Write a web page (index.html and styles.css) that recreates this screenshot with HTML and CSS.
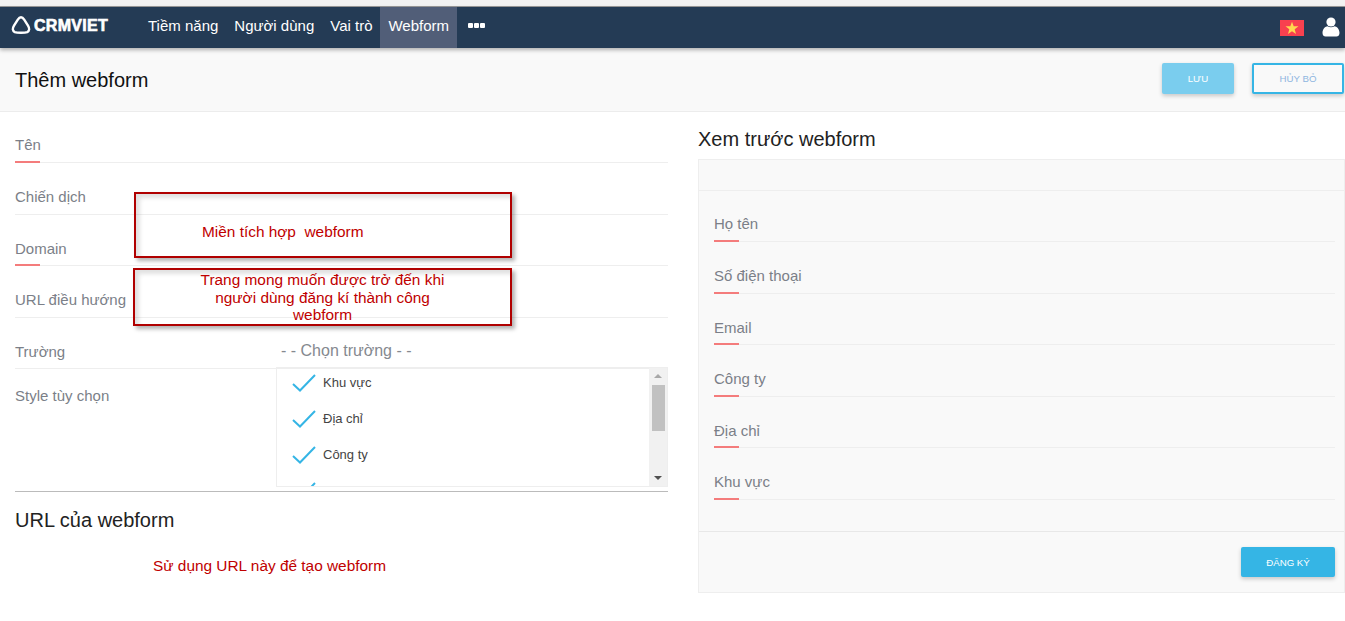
FILE: index.html
```html
<!DOCTYPE html>
<html lang="vi">
<head>
<meta charset="utf-8">
<title>Thêm webform</title>
<link rel="stylesheet" href="styles.css">
</head>
<body>
<div class="top-strip"></div>
<nav class="navbar">
  <div class="brand">
    <svg class="brand-icon" viewBox="0 0 20 20" width="20" height="20" aria-hidden="true"><path d="M10 2.2C8.6 2.2 7.7 3.2 6.8 4.6L3 10.6C1.2 13.4 1.4 16 3.8 17.1 6 18 14 18 16.2 17.1 18.6 16 18.8 13.4 17 10.6L13.2 4.6C12.3 3.2 11.4 2.2 10 2.2Z" fill="none" stroke="#fff" stroke-width="2.4"/></svg>
    <span class="brand-text">CRMVIET</span>
  </div>
  <ul class="menu">
    <li class="menu-item">Tiềm năng</li>
    <li class="menu-item">Người dùng</li>
    <li class="menu-item">Vai trò</li>
    <li class="menu-item active">Webform</li>
    <li class="menu-item more"><span></span><span></span><span></span></li>
  </ul>
  <div class="nav-right">
    <svg class="flag" viewBox="0 0 24 16" width="24" height="16" aria-hidden="true"><rect width="24" height="16" fill="#f8414f"/><polygon points="12,1.800 13.700,6.300 18.500,6.300 14.700,9.300 16,14 12,11.200 8,14 9.300,9.300 5.500,6.300 10.300,6.300" fill="#ffd84f"/></svg>
    <svg class="user" viewBox="0 0 18 20" width="18" height="20" aria-hidden="true"><circle cx="9" cy="5" r="4.600" fill="#fff"/><path d="M0.500 16C0.500 11.500 3.500 9.500 5.500 9.200 7.500 10.500 10.500 10.500 12.500 9.200 14.500 9.500 17.500 11.500 17.500 16 17.500 18.500 16 19.500 14.500 19.500H3.500C2 19.500 0.500 18.500 0.500 16Z" fill="#fff"/></svg>
  </div>
</nav>
<header class="subheader">
  <h1 class="page-title">Thêm webform</h1>
  <div class="actions">
    <button class="btn btn-save">LƯU</button>
    <button class="btn btn-cancel">HỦY BỎ</button>
  </div>
</header>
<main class="content">
  <section class="col-left">
    <div class="field req"><span class="label">Tên</span></div>
    <div class="field"><span class="label">Chiến dịch</span></div>
    <div class="field req"><span class="label">Domain</span></div>
    <div class="field"><span class="label">URL điều hướng</span></div>
    <div class="field field-select"><span class="label">Trường</span><span class="select-text">- - Chọn trường - -</span></div>
    <div class="style-row">
      <span class="label style-label">Style tùy chọn</span>
      <div class="listbox">
        <ul class="options">
          <li class="option"><svg class="check" viewBox="0 0 24 18" width="24" height="18" aria-hidden="true"><path d="M1 10L8 16.500 23 1" fill="none" stroke="#35b5e5" stroke-width="2"/></svg>Khu vực</li>
          <li class="option"><svg class="check" viewBox="0 0 24 18" width="24" height="18" aria-hidden="true"><path d="M1 10L8 16.500 23 1" fill="none" stroke="#35b5e5" stroke-width="2"/></svg>Địa chỉ</li>
          <li class="option"><svg class="check" viewBox="0 0 24 18" width="24" height="18" aria-hidden="true"><path d="M1 10L8 16.500 23 1" fill="none" stroke="#35b5e5" stroke-width="2"/></svg>Công ty</li>
          <li class="option"><svg class="check" viewBox="0 0 24 18" width="24" height="18" aria-hidden="true"><path d="M1 10L8 16.500 23 1" fill="none" stroke="#35b5e5" stroke-width="2"/></svg>Email</li>
        </ul>
        <div class="scrollbar">
          <span class="arrow-up"></span>
          <span class="thumb"></span>
          <span class="arrow-down"></span>
        </div>
      </div>
    </div>
    <h2 class="url-title">URL của webform</h2>
  </section>
  <section class="col-right">
    <h2 class="preview-title">Xem trước webform</h2>
    <div class="panel">
      <div class="panel-head"></div>
      <div class="panel-body">
        <div class="field req"><span class="label">Họ tên</span></div>
        <div class="field req"><span class="label">Số điện thoại</span></div>
        <div class="field req"><span class="label">Email</span></div>
        <div class="field req"><span class="label">Công ty</span></div>
        <div class="field req"><span class="label">Địa chỉ</span></div>
        <div class="field req"><span class="label">Khu vực</span></div>
      </div>
      <div class="panel-foot"><button class="btn btn-submit">ĐĂNG KÝ</button></div>
    </div>
  </section>
</main>
<div class="note note-domain">Miền tích hợp&nbsp; webform</div>
<div class="note note-url">Trang mong muốn được trở đến khi<br>người dùng đăng kí thành công<br>webform</div>
<div class="note-plain">Sử dụng URL này để tạo webform</div>
</body>
</html>
```
FILE: styles.css
```css
* { box-sizing: border-box; }
html, body { margin: 0; padding: 0; }
body { position: relative; height: 621px; overflow: hidden; background: #fff; font-family: "Liberation Sans", Arial, sans-serif; color: #333; }

.top-strip { height: 7px; background: #f2f2f2; border-bottom: 1px solid #9a9a9a; }

.navbar { display: flex; align-items: center; height: 41px; background: #243b55; box-shadow: 0 2px 4px rgba(0,0,0,.3); position: relative; color: #fff; }
.brand { display: flex; align-items: center; width: 140px; padding-left: 11px; gap: 3px; }
.brand-icon { flex: none; margin-top: -5px; }
.brand-text { font-size: 16px; font-weight: 700; letter-spacing: .3px; -webkit-text-stroke: .6px #fff; margin-top: -3px; }
.menu { display: flex; list-style: none; margin: 0; padding: 0; height: 100%; }
.menu-item { display: flex; align-items: center; padding: 0 8px 5px; font-size: 15px; }
.menu-item.active { background: #515e78; }
.menu-item.more { gap: 1px; padding: 0 3px 4px 11px; }
.menu-item.more span { width: 5px; height: 5px; background: #fff; border-radius: 1px; }
.nav-right { display: flex; align-items: center; margin-left: auto; gap: 18px; padding-right: 5px; }
.flag { margin-top: 1px; }
.user { margin-top: -1px; }

.subheader { display: flex; align-items: center; justify-content: space-between; height: 64px; background: #f9f9f9; border-bottom: 1px solid #ececec; padding: 0 1px 0 15px; }
.page-title { margin: 2px 0 0; font-size: 20px; font-weight: 400; color: #111; }
.actions { display: flex; gap: 18px; margin-bottom: 2px; }
.btn { font-family: inherit; font-size: 9.700px; border-radius: 2px; cursor: pointer; box-shadow: 0 2px 4px rgba(0,0,0,.2); }
.btn-save { width: 72px; height: 31px; background: #7acdee; color: #fff; border: 0; }
.btn-cancel { width: 92px; height: 31px; background: #f9f9f9; color: #8fb6e0; border: 2px solid #35b5e5; }
.btn-submit { width: 94px; height: 30px; background: #35b5e5; color: #fff; border: 0; }

.content { display: flex; align-items: flex-start; padding-left: 15px; gap: 30px; }
.col-left { width: 653px; flex: none; margin-top: -.6px; }
.col-right { flex: 1; min-width: 0; }

.field { position: relative; display: flex; align-items: flex-end; height: 51.600px; padding-bottom: 7.600px; border-bottom: 1px solid #eee; }
.field.req::after { content: ""; position: absolute; left: 0; bottom: -1px; width: 25px; height: 2px; background: #f47c7c; }
.label { font-size: 15px; line-height: 18px; color: #7b7f88; }
.field-select { height: 51px; padding-bottom: 7px; }
.select-text { position: absolute; left: 266px; bottom: 7px; font-size: 16px; line-height: 20px; color: #85898f; }

.style-row { display: flex; justify-content: space-between; height: 123px; border-bottom: 1px solid #bbb; }
.style-label { padding-top: 18px; }
.listbox { display: flex; width: 392px; height: 120px; margin-top: -2px; border: 1px solid #eee; background: #fff; overflow: hidden; }
.options { flex: 1; list-style: none; margin: -3px 0 0; padding: 0; }
.option { display: flex; align-items: center; height: 36px; padding-left: 15px; gap: 7px; font-size: 13px; color: #444; }
.check { flex: none; margin-top: 1px; }
.scrollbar { width: 18px; flex: none; background: #f1f1f1; display: flex; flex-direction: column; align-items: center; position: relative; }
.arrow-up { margin-top: 6px; border: 4px solid transparent; border-top: 0; border-bottom: 4px solid #a8a8a8; }
.thumb { width: 13px; height: 46px; background: #c1c1c1; margin-top: 7px; }
.arrow-down { position: absolute; bottom: 6px; border: 4px solid transparent; border-bottom: 0; border-top: 4px solid #505050; }

.url-title { margin: 17px 0 0; font-size: 20px; line-height: 22px; font-weight: 400; color: #222; }

.preview-title { margin: 16px 0 9px; font-size: 20px; line-height: 22px; font-weight: 400; color: #222; }
.panel { height: 434px; background: #f9f9f9; border: 1px solid #eee; display: flex; flex-direction: column; }
.panel-head { height: 31px; flex: none; border-bottom: 1px solid #eee; }
.panel-body { flex: none; padding: .4px 9px 0 15px; height: 342px; border-bottom: 1px solid #e8e8e8; margin-top: -1px; }
.panel-foot { display: flex; justify-content: flex-end; padding: 15px 9px 0 0; }

.note, .note-plain { position: absolute; color: #c00000; font-size: 15.400px; white-space: nowrap; }
.note { border: 2px solid #b00000; box-shadow: 3px 3px 4px rgba(0,0,0,.3), inset 4px 4px 4px rgba(0,0,0,.12); }
.note-domain { left: 134px; top: 192px; width: 378px; height: 66px; padding: 28px 0 0 66px; line-height: 20px; }
.note-url { left: 133px; top: 268px; width: 379px; height: 58px; padding-top: 1px; line-height: 17.500px; text-align: center; }
.note-plain { left: 153px; top: 557px; line-height: 18px; }
```
